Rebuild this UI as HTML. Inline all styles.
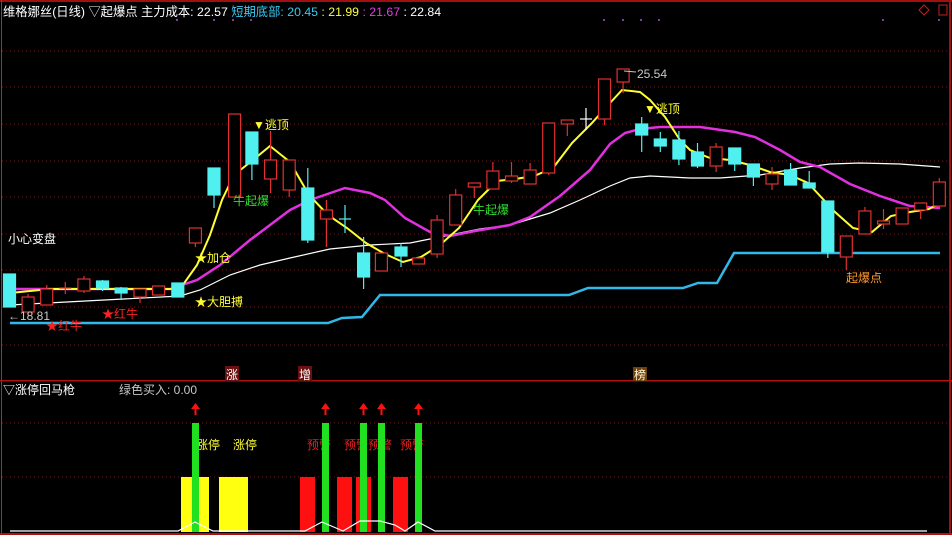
<!DOCTYPE html>
<html><head><meta charset="utf-8"><style>
html,body{margin:0;padding:0;background:#000;}
svg{display:block;}
text{font-family:"Liberation Sans","Noto Sans CJK SC",sans-serif;}
</style></head><body>
<svg width="952" height="535" viewBox="0 0 952 535" xmlns="http://www.w3.org/2000/svg">
<rect width="952" height="535" fill="#000"/>
<rect x="0" y="0" width="952" height="2" fill="#a01010"/>
<rect x="1" y="0" width="1" height="535" fill="#804040"/>
<rect x="949" y="0" width="2" height="535" fill="#a01010"/>
<rect x="0" y="380" width="952" height="1.5" fill="#b01010"/>
<rect x="0" y="533" width="952" height="2" fill="#b01010"/>
<g stroke="#7a1010" stroke-width="1" stroke-dasharray="1,3">
<line x1="2" y1="51" x2="949" y2="51"/><line x1="2" y1="87" x2="949" y2="87"/>
<line x1="2" y1="124" x2="949" y2="124"/><line x1="2" y1="161" x2="949" y2="161"/>
<line x1="2" y1="197" x2="949" y2="197"/><line x1="2" y1="234" x2="949" y2="234"/>
<line x1="2" y1="270" x2="949" y2="270"/><line x1="2" y1="307" x2="949" y2="307"/>
<line x1="2" y1="345" x2="949" y2="345"/>
<line x1="2" y1="423" x2="949" y2="423"/><line x1="2" y1="477" x2="949" y2="477"/>
</g>
<text y="16" font-size="12.3" fill="#fff"><tspan x="3">维格娜丝(日线) ▽起爆点 主力成本: 22.57 </tspan><tspan fill="#3cc8f0">短期底部: 20.45</tspan><tspan fill="#ffff40"> : 21.99</tspan><tspan fill="#e040e0"> : 21.67</tspan><tspan fill="#fff"> : 22.84</tspan></text>
<g fill="#8040a0"><rect x="176" y="19" width="2" height="2"/><rect x="213" y="19" width="2" height="2"/><rect x="232" y="19" width="2" height="2"/><rect x="250" y="19" width="2" height="2"/><rect x="603" y="19" width="2" height="2"/><rect x="622" y="19" width="2" height="2"/><rect x="640" y="19" width="2" height="2"/><rect x="658" y="19" width="2" height="2"/><rect x="882" y="19" width="2" height="2"/><rect x="938" y="19" width="2" height="2"/></g>
<path d="M924 5 L929 10 L924 15 L919 10 Z" fill="none" stroke="#c02020"/>
<rect x="939" y="5" width="8" height="10" fill="none" stroke="#c02020"/>
<polyline fill="none" stroke="#30b8e8" stroke-width="2.5" points="10,323 328,323 342,318 362,317 380,295 569,295 588,288 683,288 698,283 717,283 734,253 940,253"/>
<polyline fill="none" stroke="#fff" stroke-width="1.2" points="10,305 180,296 200,290 230,275 260,265 290,258 330,249 370,245 410,243 440,237 480,229 510,225 550,213 580,200 610,186 630,178 650,176 690,178 720,178 760,175 800,168 830,164 860,163 900,164 940,167"/>
<polyline fill="none" stroke="#e030e0" stroke-width="2.5" points="10,289 170,289 197,280 220,265 250,240 290,210 310,200 345,188 370,193 385,200 405,218 430,232 450,236 475,231 510,225 530,217 560,196 590,170 610,144 625,133 640,129 660,127 700,127 735,132 755,137 780,150 800,162 820,167 850,184 880,196 910,206 940,208"/>
<polyline fill="none" stroke="#ffff30" stroke-width="2" points="10,293 30,291 50,289 180,289 197,265 210,235 222,200 234,175 253,160 270,146 290,162 309,195 328,215 347,228 366,243 385,254 403,262 421,257 440,245 459,228 478,200 497,181 515,179 534,176 553,168 572,143 591,124 610,103 622,90 640,92 650,100 665,117 680,140 690,150 710,158 730,160 750,165 770,172 790,175 808,183 822,198 835,212 853,228 872,232 891,216 910,212 929,209 940,203"/>
<g stroke-width="1.2">
<g stroke="#e03030" fill="#000">
<line x1="28.1" y1="294" x2="28.1" y2="316"/><rect x="22.1" y="297" width="12" height="15"/>
<line x1="46.7" y1="285" x2="46.7" y2="305"/><rect x="40.7" y="289" width="12" height="16"/>
<line x1="65.3" y1="282" x2="65.3" y2="294"/><line x1="59.3" y1="288" x2="71.3" y2="288"/>
<line x1="83.9" y1="276" x2="83.9" y2="293"/><rect x="77.9" y="279" width="12" height="12"/>
<line x1="140" y1="289" x2="140" y2="303"/><rect x="134" y="289" width="12" height="8"/>
<rect x="152.6" y="286" width="12" height="9"/>
<line x1="195.4" y1="228" x2="195.4" y2="247"/><rect x="189.4" y="228" width="12" height="15"/>
<rect x="228.6" y="114" width="12" height="83"/>
<line x1="270.6" y1="131" x2="270.6" y2="193"/><rect x="264.6" y="160" width="12" height="19"/>
<line x1="289.2" y1="160" x2="289.2" y2="197"/><rect x="283.2" y="160" width="12" height="30"/>
<line x1="326.4" y1="200" x2="326.4" y2="247"/><rect x="320.4" y="210" width="12" height="9"/>
<rect x="375.4" y="253" width="12" height="18"/>
<rect x="412.6" y="258" width="12" height="6"/>
<line x1="437.1" y1="215" x2="437.1" y2="258"/><rect x="431.1" y="220" width="12" height="34"/>
<line x1="455.7" y1="189" x2="455.7" y2="225"/><rect x="449.7" y="195" width="12" height="30"/>
<line x1="474.3" y1="183" x2="474.3" y2="198"/><rect x="468.3" y="183" width="12" height="4"/>
<line x1="492.9" y1="162" x2="492.9" y2="189"/><rect x="486.9" y="171" width="12" height="18"/>
<line x1="511.5" y1="162" x2="511.5" y2="183"/><rect x="505.5" y="176" width="12" height="5"/>
<line x1="530.1" y1="163" x2="530.1" y2="184"/><rect x="524.1" y="170" width="12" height="14"/>
<line x1="548.7" y1="123" x2="548.7" y2="175"/><rect x="542.7" y="123" width="12" height="50"/>
<line x1="567.3" y1="120" x2="567.3" y2="136"/><rect x="561.3" y="120" width="12" height="4"/>
<line x1="604.5" y1="79" x2="604.5" y2="125"/><rect x="598.5" y="79" width="12" height="40"/>
<line x1="623.1" y1="69" x2="623.1" y2="93"/><rect x="617.1" y="69" width="12" height="13"/>
<line x1="716.1" y1="143" x2="716.1" y2="172"/><rect x="710.1" y="147" width="12" height="19"/>
<line x1="772" y1="167" x2="772" y2="190"/><rect x="766" y="174" width="12" height="10"/>
<line x1="846.3" y1="236" x2="846.3" y2="270"/><rect x="840.3" y="236" width="12" height="21"/>
<line x1="864.9" y1="207" x2="864.9" y2="234"/><rect x="858.9" y="211" width="12" height="23"/>
<line x1="883.5" y1="209" x2="883.5" y2="229"/><rect x="877.5" y="221" width="12" height="3"/>
<rect x="896.1" y="208" width="12" height="16"/>
<line x1="920.7" y1="203" x2="920.7" y2="219"/><rect x="914.7" y="203" width="12" height="7"/>
<line x1="939.3" y1="178" x2="939.3" y2="206"/><rect x="933.3" y="182" width="12" height="24"/>
</g>
<g stroke="#50f0f0" fill="#50f0f0">
<rect x="3.5" y="274" width="12" height="33"/>
<line x1="102.5" y1="280" x2="102.5" y2="291"/><rect x="96.5" y="281" width="12" height="7"/>
<line x1="121.1" y1="287" x2="121.1" y2="299"/><rect x="115.1" y="288" width="12" height="5"/>
<rect x="171.8" y="283" width="12" height="14"/>
<line x1="214" y1="168" x2="214" y2="208"/><rect x="208" y="168" width="12" height="27"/>
<line x1="251.9" y1="132" x2="251.9" y2="180"/><rect x="245.9" y="132" width="12" height="32"/>
<line x1="307.8" y1="168" x2="307.8" y2="243"/><rect x="301.8" y="188" width="12" height="52"/>
<line x1="345" y1="205" x2="345" y2="233"/><line x1="339" y1="219" x2="351" y2="219"/>
<line x1="363.6" y1="237" x2="363.6" y2="289"/><rect x="357.6" y="253" width="12" height="24"/>
<line x1="401" y1="243" x2="401" y2="267"/><rect x="395" y="247" width="12" height="9"/>
<line x1="641.7" y1="117" x2="641.7" y2="152"/><rect x="635.7" y="124" width="12" height="11"/>
<line x1="660.3" y1="132" x2="660.3" y2="152"/><rect x="654.3" y="139" width="12" height="7"/>
<line x1="678.9" y1="131" x2="678.9" y2="165"/><rect x="672.9" y="140" width="12" height="19"/>
<line x1="697.5" y1="143" x2="697.5" y2="168"/><rect x="691.5" y="152" width="12" height="14"/>
<line x1="734.7" y1="148" x2="734.7" y2="171"/><rect x="728.7" y="148" width="12" height="16"/>
<line x1="753.4" y1="164" x2="753.4" y2="186"/><rect x="747.4" y="164" width="12" height="13"/>
<line x1="790.6" y1="163" x2="790.6" y2="185"/><rect x="784.6" y="170" width="12" height="15"/>
<line x1="809.2" y1="171" x2="809.2" y2="188"/><rect x="803.2" y="183" width="12" height="5"/>
<line x1="827.8" y1="201" x2="827.8" y2="258"/><rect x="821.8" y="201" width="12" height="51"/>
</g>
<g stroke="#fff"><line x1="586" y1="108" x2="586" y2="130"/><line x1="580" y1="119" x2="592" y2="119"/></g>
</g>
<g font-size="12">
<text x="8" y="243" fill="#fff">小心变盘</text>
<text x="8" y="320" fill="#c8c8c8">←18.81</text>
<text x="46" y="330" fill="#ff2020">★红牛</text>
<text x="102" y="318" fill="#ff2020">★红牛</text>
<text x="195" y="262" fill="#ffff30">★加仓</text>
<text x="195" y="306" fill="#ffff30">★大胆搏</text>
<text x="233" y="205" fill="#30e030">牛起爆</text>
<text x="253" y="129" fill="#ffff30">▼逃顶</text>
<text x="473" y="214" fill="#30e030">牛起爆</text>
<text x="637" y="78" fill="#c8c8c8">25.54</text>
<text x="644" y="113" fill="#ffff30">▼逃顶</text>
<text x="846" y="282" fill="#ff9a30">起爆点</text>
</g>
<line x1="624" y1="71" x2="636" y2="72" stroke="#c8c8c8"/>
<rect x="225" y="366" width="14" height="15" fill="#6a1010"/><text x="226" y="379" font-size="12" fill="#fff">涨</text>
<rect x="298" y="366" width="14" height="15" fill="#6a1010"/><text x="299" y="379" font-size="12" fill="#fff">增</text>
<rect x="633" y="367" width="14" height="14" fill="#704010"/><text x="634" y="379" font-size="12" fill="#fff8d0">榜</text>
<text x="3" y="394" font-size="12" fill="#fff">▽涨停回马枪</text>
<text x="119" y="394" font-size="12" fill="#c8c8c8">绿色买入: 0.00</text>
<g fill="#ffff10"><rect x="181" y="477" width="28" height="55"/><rect x="219" y="477" width="29" height="55"/></g>
<g fill="#ff1010"><rect x="300" y="477" width="15" height="55"/><rect x="337" y="477" width="15" height="55"/><rect x="356" y="477" width="15" height="55"/><rect x="393" y="477" width="15" height="55"/></g>
<g font-size="12"><text x="196" y="449" fill="#ffff30">涨停</text><text x="233" y="449" fill="#ffff30">涨停</text>
<text x="307" y="449" fill="#e02020">预警</text><text x="344" y="449" fill="#e02020">预警</text><text x="368" y="449" fill="#e02020">预警</text><text x="400" y="449" fill="#e02020">预警</text></g>
<g fill="#20e020"><rect x="192" y="423" width="7" height="109"/><rect x="322" y="423" width="7" height="109"/><rect x="360" y="423" width="7" height="109"/><rect x="378" y="423" width="7" height="109"/><rect x="415" y="423" width="7" height="109"/></g>
<g stroke="#ff1010" stroke-width="2" fill="#ff1010">
<line x1="195.5" y1="407" x2="195.5" y2="415"/><path d="M191 409 L195.5 403 L200 409Z" stroke="none"/>
<line x1="325.5" y1="407" x2="325.5" y2="415"/><path d="M321 409 L325.5 403 L330 409Z" stroke="none"/>
<line x1="363.5" y1="407" x2="363.5" y2="415"/><path d="M359 409 L363.5 403 L368 409Z" stroke="none"/>
<line x1="381.5" y1="407" x2="381.5" y2="415"/><path d="M377 409 L381.5 403 L386 409Z" stroke="none"/>
<line x1="418.5" y1="407" x2="418.5" y2="415"/><path d="M414 409 L418.5 403 L423 409Z" stroke="none"/>
</g>
<polyline fill="none" stroke="#fff" stroke-width="1.2" points="10,531 178,531 195,522 213,531 305,531 322,522 343,531 360,521 367,521 380,521 395,525 405,531 418,522 435,531 927,531"/>
</svg>
</body></html>
